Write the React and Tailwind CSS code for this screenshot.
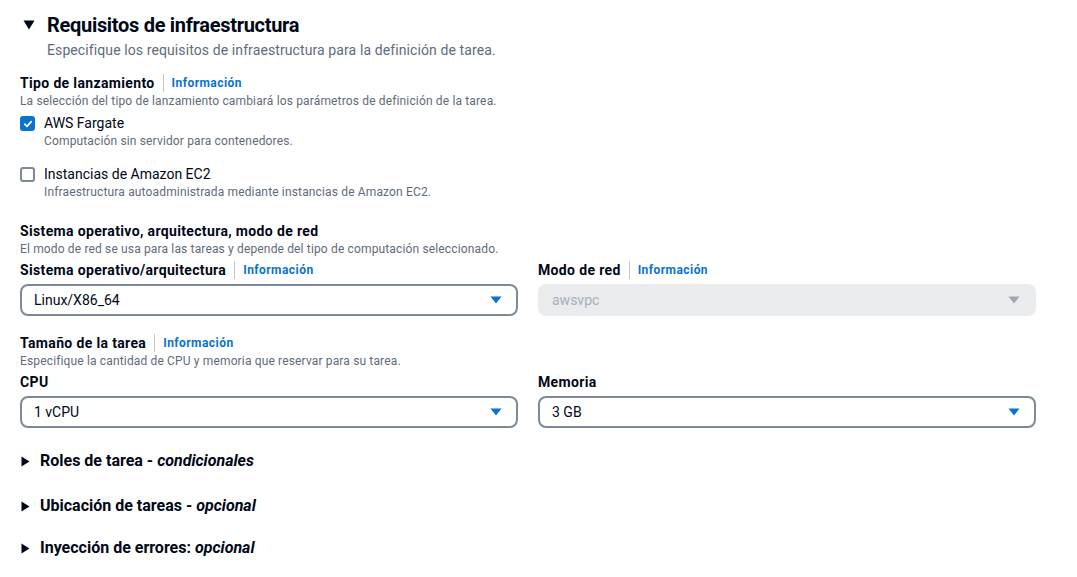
import React from 'react';

const font = { fontFamily: 'Roboto, "Liberation Sans", sans-serif' };

function Info() {
  return (
    <>
      <span className="mx-2 h-[18px] w-px bg-[#c6c6cd]" />
      <a className="text-[12px] font-bold tracking-[0.45px] text-[#0972d3]">Información</a>
    </>
  );
}

function Label({ children, info }) {
  return (
    <div className="flex items-center h-[20px]">
      <span className="text-[14px] font-bold tracking-[0.35px] text-[#000716]">{children}</span>
      {info && <Info />}
    </div>
  );
}

function Hint({ children }) {
  return <div className="text-[12px] leading-[16px] tracking-[0.15px] text-[#5f6b7a]">{children}</div>;
}

function Caret({ disabled }) {
  return (
    <svg width="12" height="8" viewBox="0 0 12 8">
      <path d="M0.5 0.5 H11.5 L6 7.5 Z" fill={disabled ? '#9ba7b6' : '#0972d3'} />
    </svg>
  );
}

function Select({ value, disabled }) {
  if (disabled) {
    return (
      <div className="flex items-center justify-between h-[32px] rounded-lg bg-[#e9ebed] pl-[14px] pr-[16px] text-[14px] text-[#a7b0bb]">
        <span>{value}</span>
        <Caret disabled />
      </div>
    );
  }
  return (
    <div className="flex items-center justify-between h-[32px] rounded-lg border-2 border-[#7d8998] pl-[12px] pr-[14px] text-[14px] text-[#000716]">
      <span>{value}</span>
      <Caret />
    </div>
  );
}

function Check({ checked }) {
  if (checked) {
    return (
      <span className="flex h-[15px] w-[15px] items-center justify-center rounded-[3px] bg-[#0972d3]">
        <svg width="10" height="10" viewBox="0 0 10 10">
          <path d="M1.8 5.2 L4 7.3 L8.2 2.6" fill="none" stroke="white" strokeWidth="1.8" strokeLinecap="round" strokeLinejoin="round" />
        </svg>
      </span>
    );
  }
  return <span className="block h-[15px] w-[15px] rounded-[3px] border-2 border-[#7d8998]" />;
}

function Option({ checked, title, desc }) {
  return (
    <div className="flex">
      <div className="pt-[3px]">
        <Check checked={checked} />
      </div>
      <div className="ml-[9px]">
        <div className="text-[14px] leading-[20px] text-[#000716]">{title}</div>
        <Hint>{desc}</Hint>
      </div>
    </div>
  );
}

function Expander({ title, sep, em }) {
  return (
    <div className="flex items-center h-[22px]">
      <svg width="9" height="11" viewBox="0 0 9 11" className="ml-[1px]">
        <path d="M0.5 0.5 L8.5 5.5 L0.5 10.5 Z" fill="#000716" />
      </svg>
      <span className="ml-[10px] text-[16px] font-bold text-[#000716]">
        {title}
        {sep}
        <em>{em}</em>
      </span>
    </div>
  );
}

export default function App() {
  return (
    <div className="h-[577px] w-[1077px] overflow-hidden bg-white" style={font}>
      <div className="-ml-[14px] -mt-[6px] h-[595px] w-[1120px] rounded-[16px] border border-[#e9ebed] pl-[33px] pt-[17px]">
        <div className="flex items-center h-[26px]">
          <svg width="12" height="10" viewBox="0 0 12 10" className="ml-[3px]">
            <path d="M0.5 0.5 H11.5 L6 9.5 Z" fill="#000716" />
          </svg>
          <h2 className="ml-[12px] text-[20px] font-bold tracking-[-0.3px] text-[#000716]">Requisitos de infraestructura</h2>
        </div>
        <p className="ml-[27px] mt-[2px] text-[14px] leading-[20px] tracking-[0.1px] text-[#5f6b7a]">
          Especifique los requisitos de infraestructura para la definición de tarea.
        </p>

        <div className="mt-[13px] w-[1016px]">
          <Label info>Tipo de lanzamiento</Label>
          <Hint>La selección del tipo de lanzamiento cambiará los parámetros de definición de la tarea.</Hint>
          <div className="mt-[4px] flex flex-col gap-[15px]">
            <Option checked title="AWS Fargate" desc="Computación sin servidor para contenedores." />
            <Option title="Instancias de Amazon EC2" desc="Infraestructura autoadministrada mediante instancias de Amazon EC2." />
          </div>

          <div className="mt-[21px]">
            <Label>Sistema operativo, arquitectura, modo de red</Label>
            <Hint>El modo de red se usa para las tareas y depende del tipo de computación seleccionado.</Hint>
            <div className="mt-[3px] grid grid-cols-2 gap-x-[20px]">
              <div>
                <Label info>Sistema operativo/arquitectura</Label>
                <div className="mt-[4px]">
                  <Select value="Linux/X86_64" />
                </div>
              </div>
              <div>
                <Label info>Modo de red</Label>
                <div className="mt-[4px]">
                  <Select value="awsvpc" disabled />
                </div>
              </div>
            </div>
          </div>

          <div className="mt-[17px]">
            <Label info>Tamaño de la tarea</Label>
            <Hint>Especifique la cantidad de CPU y memoria que reservar para su tarea.</Hint>
            <div className="mt-[3px] grid grid-cols-2 gap-x-[20px]">
              <div>
                <Label>CPU</Label>
                <div className="mt-[4px]">
                  <Select value="1 vCPU" />
                </div>
              </div>
              <div>
                <Label>Memoria</Label>
                <div className="mt-[4px]">
                  <Select value="3 GB" />
                </div>
              </div>
            </div>
          </div>

          <div className="mt-[22px] flex flex-col">
            <Expander title="Roles de tarea" sep=" - " em="condicionales" />
            <div className="mt-[23px]">
              <Expander title="Ubicación de tareas" sep=" - " em="opcional" />
            </div>
            <div className="mt-[20px]">
              <Expander title="Inyección de errores:" sep=" " em="opcional" />
            </div>
          </div>
        </div>
      </div>
    </div>
  );
}
